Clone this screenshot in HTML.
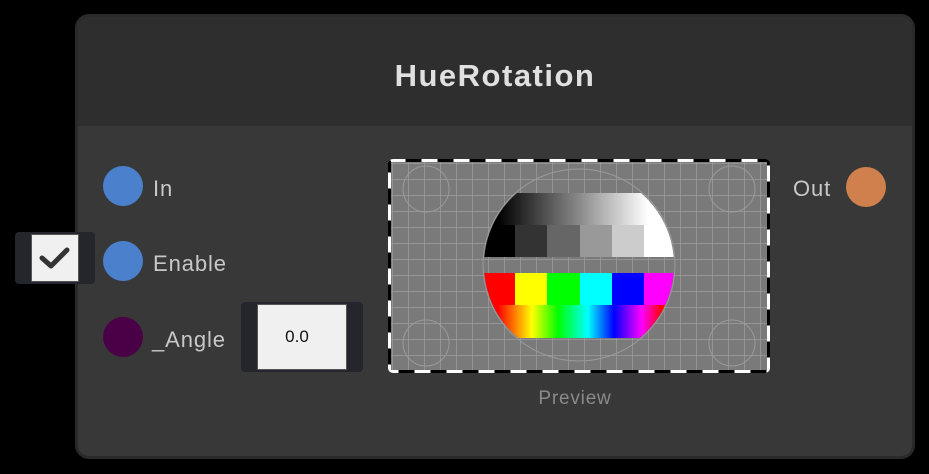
<!DOCTYPE html>
<html><head><meta charset="utf-8"><style>
html,body{margin:0;padding:0;background:#000;width:929px;height:474px;overflow:hidden;font-family:"Liberation Sans","DejaVu Sans",sans-serif;}
.node{position:absolute;left:75px;top:14px;width:834px;height:439px;border:3px solid #2a2a2a;border-radius:14px;background:#383838;overflow:hidden;}
.head{position:absolute;left:0;top:0;right:0;height:109px;background:#2e2e2e;}
.title{position:absolute;left:0;right:0;top:41px;text-align:center;color:#e0e0e0;font-size:31px;font-weight:bold;letter-spacing:1.5px;}
.port{position:absolute;width:40px;height:40px;border-radius:50%;}
.lbl{position:absolute;color:#c8c8c8;font-size:22px;letter-spacing:0.9px;}
</style></head><body>
<div class="node"><div class="head"><div class="title">HueRotation</div></div></div>

<div class="port" style="left:103px;top:166px;background:#4a80cc"></div>
<div class="lbl" style="left:153px;top:176px">In</div>
<div class="port" style="left:103px;top:241px;background:#4a80cc"></div>
<div class="lbl" style="left:153px;top:251px">Enable</div>
<div class="port" style="left:103px;top:317px;background:#4a0046"></div>
<div class="lbl" style="left:152px;top:327px">_Angle</div>

<div style="position:absolute;left:15px;top:232px;width:80px;height:52px;background:#25252d;border-radius:4px"></div>
<div style="position:absolute;left:31px;top:234px;width:46px;height:46px;background:#f0f0f0;border:1px solid #555"></div>
<svg style="position:absolute;left:31px;top:234px" width="48" height="48"><path d="M11 24 L20 32 L36 16" stroke="#333" stroke-width="5" fill="none" stroke-linecap="round" stroke-linejoin="round"/></svg>

<div style="position:absolute;left:241px;top:302px;width:122px;height:70px;background:#25252d;border-radius:4px"></div>
<div style="position:absolute;left:257px;top:304px;width:88px;height:64px;background:#f0f0f0;border:1px solid #555"></div>
<div style="position:absolute;left:257px;top:327px;width:80px;text-align:center;font-size:17px;color:#111">0.0</div>

<div class="lbl" style="left:793px;top:176px">Out</div>
<div class="port" style="left:846px;top:167px;background:#d0804c"></div>

<svg style="position:absolute;left:388px;top:159px" width="382" height="214" viewBox="0 0 382 214">
<defs>
<clipPath id="r"><rect x="0" y="0" width="382" height="214" rx="5"/></clipPath>
<clipPath id="c"><circle cx="191" cy="106" r="95"/></clipPath>
<linearGradient id="g1"><stop offset="0.1" stop-color="#000"/><stop offset="0.85" stop-color="#fff"/></linearGradient>
<linearGradient id="hue"><stop offset="0.1" stop-color="#f00"/><stop offset="0.27" stop-color="#ff0"/><stop offset="0.4" stop-color="#0f0"/><stop offset="0.55" stop-color="#0ff"/><stop offset="0.68" stop-color="#00f"/><stop offset="0.82" stop-color="#f0f"/><stop offset="0.92" stop-color="#f00"/></linearGradient>
<pattern id="grid" width="16" height="16" patternUnits="userSpaceOnUse" x="4" y="4"><path d="M0 0V16M0 0H16" stroke="#c8c8c8" stroke-width="1.5" fill="none"/></pattern>
</defs>
<g clip-path="url(#r)">
<rect width="382" height="214" fill="#3c3c3c"/>
<rect x="2" y="2" width="378" height="210" fill="#7a7a7a"/>
<rect x="2" y="2" width="378" height="210" fill="url(#grid)" opacity="0.45"/>
<g fill="none" stroke="#9a9a9a" stroke-width="1">
<circle cx="38" cy="30" r="23"/><circle cx="344" cy="30" r="23"/><circle cx="38" cy="184" r="23"/><circle cx="344" cy="184" r="23"/><circle cx="191" cy="106" r="96"/></g>
<g clip-path="url(#c)">
<rect x="90" y="34" width="200" height="32" fill="url(#g1)"/>
<rect x="90" y="66" width="37" height="32" fill="#000"/>
<rect x="127" y="66" width="32" height="32" fill="#333"/>
<rect x="159" y="66" width="33" height="32" fill="#666"/>
<rect x="192" y="66" width="32" height="32" fill="#999"/>
<rect x="224" y="66" width="32" height="32" fill="#ccc"/>
<rect x="256" y="66" width="40" height="32" fill="#fff"/>
<rect x="90" y="114" width="37" height="32" fill="#f00"/>
<rect x="127" y="114" width="32" height="32" fill="#ff0"/>
<rect x="159" y="114" width="33" height="32" fill="#0f0"/>
<rect x="192" y="114" width="32" height="32" fill="#0ff"/>
<rect x="224" y="114" width="32" height="32" fill="#00f"/>
<rect x="256" y="114" width="40" height="32" fill="#f0f"/>
<rect x="90" y="146" width="200" height="33" fill="url(#hue)"/>
</g>
<g stroke-width="3" stroke-dasharray="16 16" fill="none">
<rect x="1.5" y="1.5" width="379" height="211" stroke="#fff"/>
<rect x="1.5" y="1.5" width="379" height="211" stroke="#000" stroke-dashoffset="16"/>
</g>
</g>
</svg>
<div style="position:absolute;left:475px;top:388px;width:200px;text-align:center;color:#8a8a8a;font-size:19px;letter-spacing:0.8px">Preview</div>
</body></html>
